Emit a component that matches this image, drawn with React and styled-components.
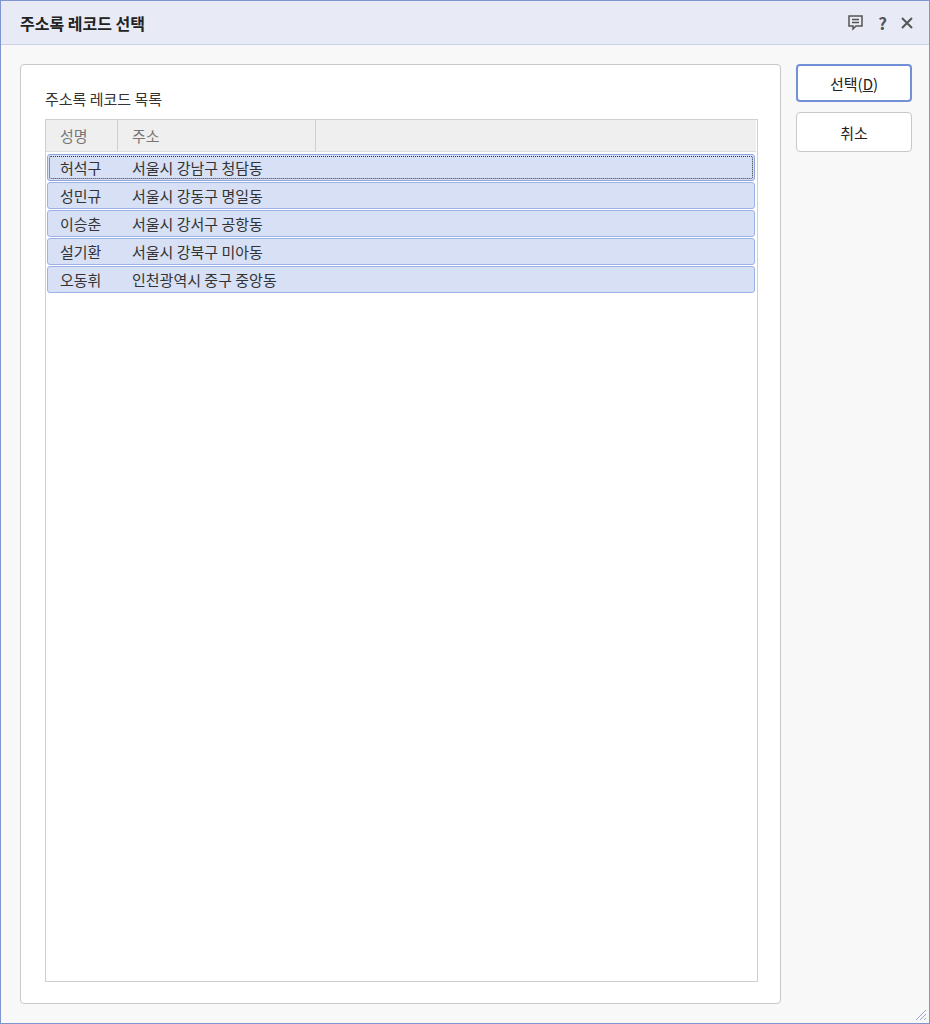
import React from 'react';
import styled, { createGlobalStyle } from 'styled-components';

const Global = createGlobalStyle`
  html, body { margin: 0; padding: 0; background: #fff; }
  body { font-family: "Noto Sans CJK KR", "Noto Sans", sans-serif; }
`;

const Window = styled.div`
  width: 930px;
  height: 1024px;
  box-sizing: border-box;
  border: 1px solid #7e95cf;
  background: #f8f8f8;
  display: flex;
  flex-direction: column;
  position: relative;
`;

const TitleBar = styled.div`
  height: 43px;
  flex-shrink: 0;
  background: #e8ebf6;
  border-bottom: 1px solid #c9d0e8;
  display: flex;
  align-items: center;
  padding: 0 16px 0 19px;
`;

const Title = styled.div`
  flex: 1;
  font-size: 16px;
  font-weight: 700;
  color: #222;
`;

const TitleIcons = styled.div`
  display: flex;
  align-items: center;
  gap: 14px;
  color: #555;
  font-size: 17px;
  font-weight: 700;
`;

const Body = styled.div`
  flex: 1;
  display: flex;
  gap: 15px;
  padding: 19px 17px 19px 19px;
`;

const Panel = styled.div`
  flex: 1;
  background: #fff;
  border: 1px solid #c8c8c8;
  border-radius: 4px;
  padding: 23px 22px 21px 24px;
  display: flex;
  flex-direction: column;
`;

const Label = styled.div`
  font-size: 15px;
  color: #333;
  margin-bottom: 10px;
`;

const List = styled.div`
  flex: 1;
  border: 1px solid #cfcfcf;
  display: flex;
  flex-direction: column;
`;

const Header = styled.div`
  display: flex;
  height: 31px;
  background: #efefef;
  border-bottom: 1px solid #dcdcdc;
  margin-right: 1px;
`;

const HeadCell = styled.div`
  width: ${p => p.$w}px;
  ${p => p.$grow && 'flex: 1;'}
  border-right: ${p => p.$grow ? 'none' : '1px solid #cfcfcf'};
  font-size: 15px;
  color: #777;
  display: flex;
  align-items: center;
  padding-left: 14px;
  box-sizing: border-box;
`;

const Rows = styled.div`
  padding: 2px 2px 0 1px;
  display: flex;
  flex-direction: column;
`;

const Row = styled.div`
  height: 27px;
  box-sizing: border-box;
  margin-bottom: 1px;
  background: #d7e0f5;
  border: 1px solid ${p => p.$focus ? '#8ea4dc' : '#9cb2e6'};
  border-radius: 3px;
  display: flex;
  align-items: center;
  font-size: 15px;
  color: #333;
  position: relative;
  ${p => p.$focus && `
    &::after {
      content: '';
      position: absolute;
      inset: 1px;
      border: 1px dotted #333;
      border-radius: 2px;
    }
  `}
`;

const Cell = styled.div`
  width: ${p => p.$w}px;
  padding-left: 12px;
  box-sizing: border-box;
  white-space: nowrap;
`;

const Side = styled.div`
  width: 116px;
  display: flex;
  flex-direction: column;
  gap: 10px;
`;

const Button = styled.div`
  height: ${p => p.$primary ? 38 : 40}px;
  box-sizing: border-box;
  background: #fff;
  border: ${p => p.$primary ? '2px solid #7290d8' : '1px solid #c8c8c8'};
  border-radius: 4px;
  display: flex;
  align-items: center;
  justify-content: center;
  font-size: 15px;
  color: #222;
`;

const Grip = styled.svg`
  position: absolute;
  right: 2px;
  bottom: 2px;
`;

const rows = [
  ['허석구', '서울시 강남구 청담동'],
  ['성민규', '서울시 강동구 명일동'],
  ['이승춘', '서울시 강서구 공항동'],
  ['설기환', '서울시 강북구 미아동'],
  ['오동휘', '인천광역시 중구 중앙동'],
];

export default function App() {
  return (
    <Window>
      <Global />
      <TitleBar>
        <Title>주소록 레코드 선택</Title>
        <TitleIcons>
          <svg width="17" height="17" viewBox="0 0 17 17" fill="none" stroke="#555" strokeWidth="1.5">
            <path d="M2 2h13v10H9l-3 3v-3H2z" />
            <path d="M5 5.5h7M5 8.5h7" />
          </svg>
          <span>?</span>
          <svg width="12" height="12" viewBox="0 0 12 12" stroke="#555" strokeWidth="2">
            <path d="M1 1l10 10M11 1L1 11" />
          </svg>
        </TitleIcons>
      </TitleBar>
      <Body>
        <Panel>
          <Label>주소록 레코드 목록</Label>
          <List>
            <Header>
              <HeadCell $w={72}>성명</HeadCell>
              <HeadCell $w={198}>주소</HeadCell>
              <HeadCell $grow />
            </Header>
            <Rows>
              {rows.map((r, i) => (
                <Row key={i} $focus={i === 0}>
                  <Cell $w={72}>{r[0]}</Cell>
                  <Cell $w={300}>{r[1]}</Cell>
                </Row>
              ))}
            </Rows>
          </List>
        </Panel>
        <Side>
          <Button $primary>선택(<u>D</u>)</Button>
          <Button>취소</Button>
        </Side>
      </Body>
      <Grip width="14" height="14" viewBox="0 0 14 14" stroke="#9aa8cc" strokeWidth="1">
        <path d="M13 3L3 13M13 7L7 13M13 11L11 13" />
      </Grip>
    </Window>
  );
}
